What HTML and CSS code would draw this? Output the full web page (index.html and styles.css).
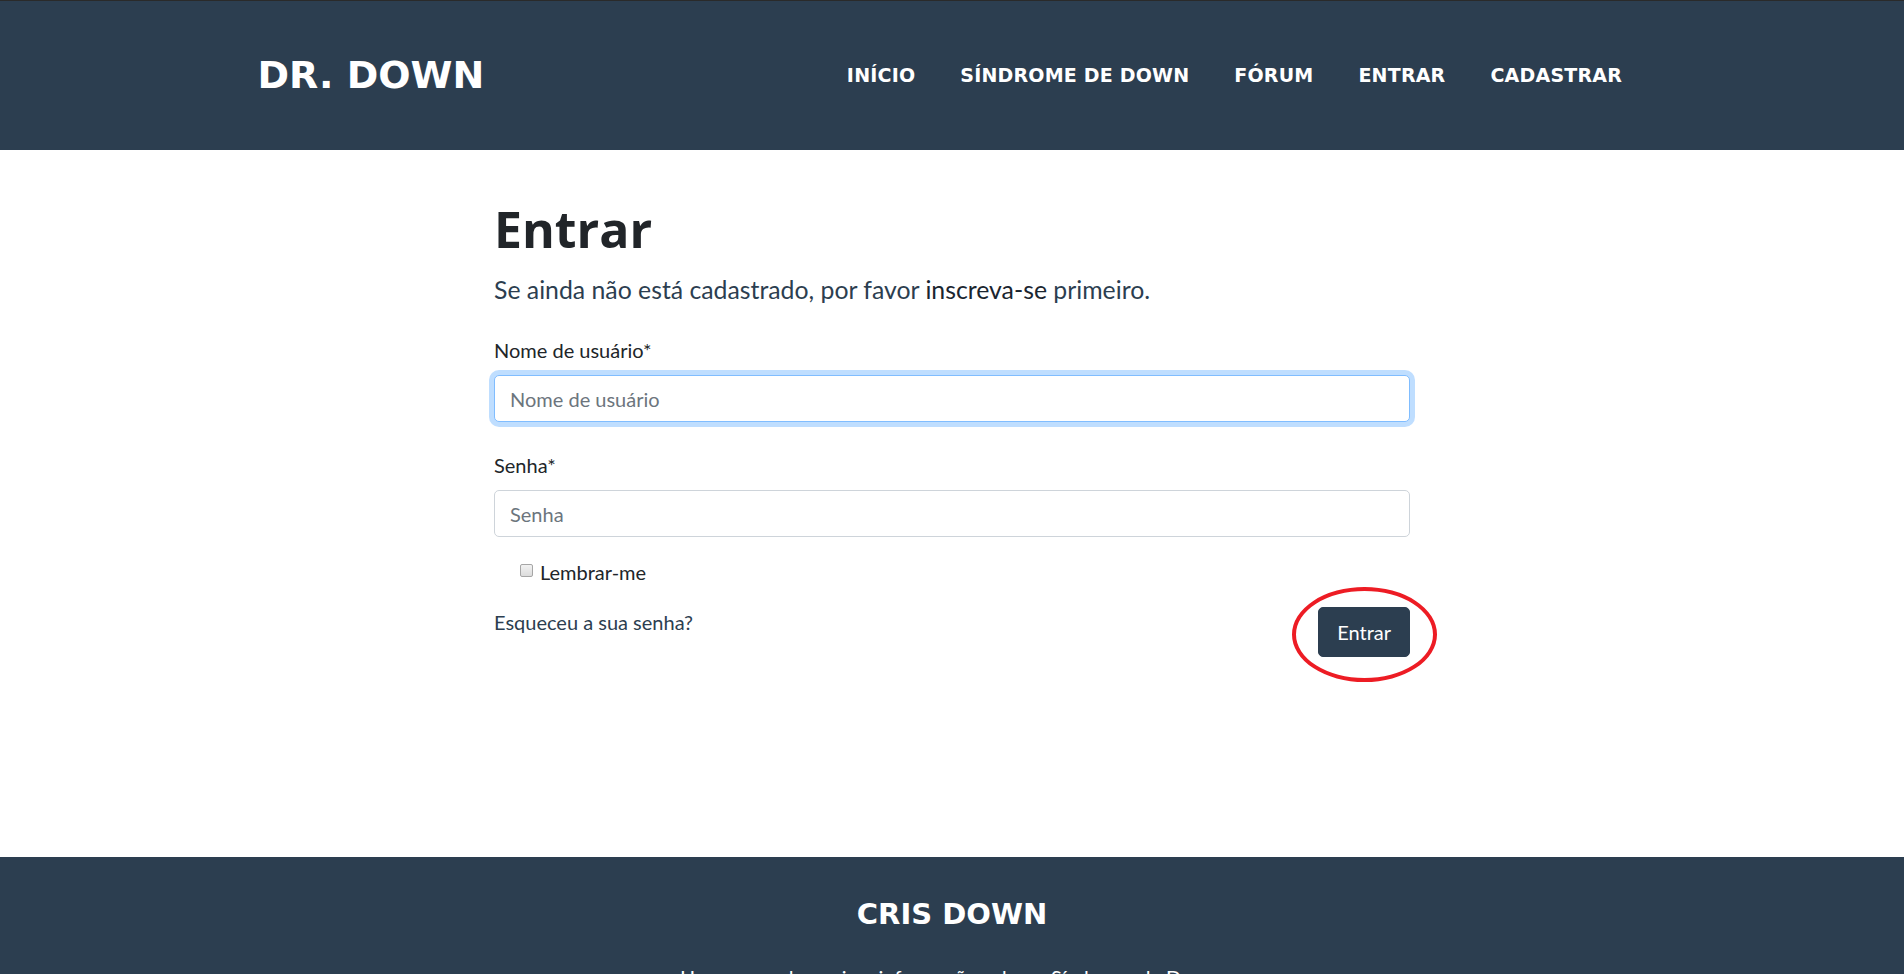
FILE: index.html
```html
<!DOCTYPE html>
<html lang="pt-BR">
<head>
<meta charset="utf-8">
<title>Entrar - Dr. Down</title>
<link rel="stylesheet" href="styles.css">
</head>
<body>
<header class="site-header">
  <div class="container header-inner">
    <a class="brand" href="#">DR. DOWN</a>
    <nav class="main-nav">
      <a href="#">INÍCIO</a>
      <a href="#">SÍNDROME DE DOWN</a>
      <a href="#">FÓRUM</a>
      <a href="#">ENTRAR</a>
      <a href="#">CADASTRAR</a>
    </nav>
  </div>
</header>

<main class="main">
  <div class="form-col">
    <h1 class="page-title">Entrar</h1>
    <p class="lead">Se ainda não está cadastrado, por favor <a href="#">inscreva-se</a> primeiro.</p>

    <form class="login-form">
      <div class="form-group">
        <label class="field-label" for="username">Nome de usuário*</label>
        <input class="form-control is-focused" id="username" type="text" placeholder="Nome de usuário" autofocus>
      </div>
      <div class="form-group">
        <label class="field-label" for="password">Senha*</label>
        <input class="form-control" id="password" type="password" placeholder="Senha">
      </div>
      <div class="form-check">
        <input class="check" type="checkbox" id="remember">
        <label for="remember">Lembrar-me</label>
      </div>
      <div class="form-actions">
        <a class="forgot" href="#">Esqueceu a sua senha?</a>
        <div class="btn-wrap">
          <button class="btn" type="button">Entrar</button>
          <span class="annotation"></span>
        </div>
      </div>
    </form>
  </div>
</main>

<footer class="site-footer">
  <h4 class="footer-title">CRIS DOWN</h4>
  <p class="footer-text">Um espaço de apoio e informação sobre a Síndrome de Down.</p>
</footer>
</body>
</html>
```

FILE: styles.css
```css
* {
  box-sizing: border-box;
}

html, body {
  margin: 0;
  padding: 0;
}

body {
  font-family: Lato, "Liberation Sans", sans-serif;
  font-size: 20px;
  line-height: 1.5;
  color: #212529;
  background: #fff;
}

a {
  text-decoration: none;
}

/* Header */
.site-header {
  background: #2c3e50;
  border-top: 1px solid #2a2a2a;
  height: 150px;
}

.container {
  width: 1425px;
  margin: 0 auto;
  padding: 0 20px;
}

.header-inner {
  height: 100%;
  display: flex;
  align-items: center;
  justify-content: space-between;
}

.brand {
  font-family: "DejaVu Sans", sans-serif;
  font-weight: 700;
  font-size: 38px;
  line-height: 1.2;
  color: #fff;
  margin-left: -2px;
}

.main-nav {
  display: flex;
  align-items: center;
}

.main-nav a {
  font-family: "DejaVu Sans", sans-serif;
  font-weight: 700;
  font-size: 19px;
  line-height: 1.2;
  letter-spacing: 0.2px;
  color: #fff;
  padding: 0 22.5px;
}

/* Main */
.main {
  min-height: 707px;
  padding-top: 49px;
}

.form-col {
  width: 916px;
  margin: 0 auto;
}

.page-title {
  font-family: "Open Sans", sans-serif;
  font-weight: 700;
  font-size: 50px;
  line-height: 1.2;
  color: #212529;
  margin: 0 0 12px;
}

.lead {
  font-size: 24.8px;
  line-height: 1.5;
  color: #2c3e50;
  margin: 0 0 27px;
}

.lead a {
  color: #1a252f;
}

.form-group {
  margin-bottom: 28px;
}

.field-label {
  display: block;
  line-height: 30px;
  margin-bottom: 10px;
  color: #212529;
}

.form-control {
  display: block;
  width: 100%;
  height: 47px;
  padding: 0 15px;
  font-family: Lato, "Liberation Sans", sans-serif;
  font-size: 20px;
  color: #495057;
  background: #fff;
  border: 1px solid #ced4da;
  border-radius: 5px;
  outline: none;
}

.form-control::placeholder {
  color: #6c757d;
}

.form-control.is-focused,
.form-control:focus {
  border-color: #80bdff;
  box-shadow: 0 0 0 5px rgba(0, 123, 255, 0.25);
}

.form-check {
  display: flex;
  align-items: center;
  padding-left: 26px;
  margin-top: -8px;
  margin-bottom: 20px;
  line-height: 30px;
  color: #212529;
}

.check {
  appearance: none;
  -webkit-appearance: none;
  width: 13px;
  height: 13px;
  margin: -4px 7px 0 0;
  border: 1px solid #a6a6a6;
  border-radius: 2px;
  background: linear-gradient(#f2f2f2, #dcdcdc);
}

.form-actions {
  display: flex;
  justify-content: space-between;
  align-items: flex-start;
}

.forgot {
  color: #2c3e50;
  line-height: 30px;
  margin-top: 0;
}

.btn-wrap {
  position: relative;
}

.btn {
  font-family: Lato, "Liberation Sans", sans-serif;
  font-size: 20px;
  line-height: 30px;
  color: #fff;
  background: #2c3e50;
  border: 1px solid #2c3e50;
  border-radius: 5px;
  padding: 9px 18px;
  cursor: pointer;
}

.annotation {
  position: absolute;
  left: -26px;
  top: -20px;
  width: 145px;
  height: 95px;
  border: 4px solid #ed1c24;
  border-radius: 50%;
  pointer-events: none;
}

/* Footer */
.site-footer {
  background: #2c3e50;
  color: #fff;
  text-align: center;
  padding: 40px 0 60px;
}

.footer-title {
  font-family: "DejaVu Sans", sans-serif;
  font-weight: 700;
  font-size: 29px;
  line-height: 1.2;
  margin: 0 0 30px;
}

.footer-text {
  font-size: 20px;
  line-height: 30px;
  margin: 0;
}
```
